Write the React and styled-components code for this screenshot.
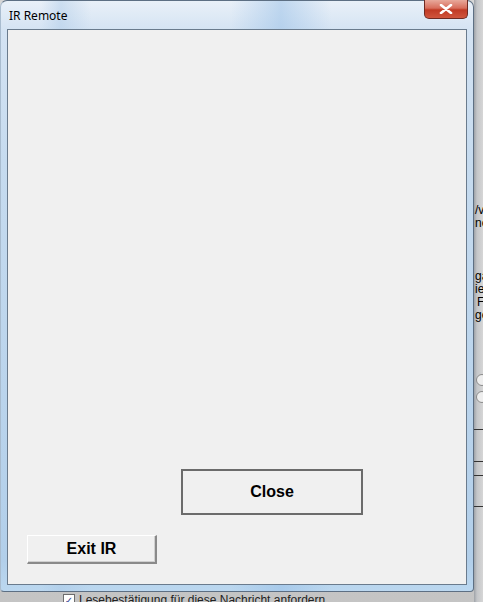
import React from 'react'
import styled, { createGlobalStyle } from 'styled-components'

const Global = createGlobalStyle`
  html, body { margin: 0; padding: 0; background: #c9c9c9; }
`;

const Desktop = styled.div`
  width: 483px;
  height: 602px;
  overflow: hidden;
  display: grid;
  grid-template-columns: 474px 9px;
  grid-template-rows: 592px 10px;
  background: linear-gradient(180deg, #d6d6d6, #c4c4c4);
  font-family: "Noto Sans", "DejaVu Sans", sans-serif;
`;

const Frame = styled.div`
  grid-column: 1;
  grid-row: 1;
  display: flex;
  flex-direction: column;
  border-radius: 7px 7px 4px 4px;
  border: 1px solid #5d6f83;
  border-left-color: #a9bccf;
  box-sizing: border-box;
  background:
    linear-gradient(90deg, rgba(255,255,255,0) 0px, rgba(255,255,255,0) 40px, rgba(170,200,230,0.45) 60px, rgba(255,255,255,0) 90px, rgba(255,255,255,0) 230px, rgba(150,190,230,0.5) 280px, rgba(255,255,255,0) 330px),
    linear-gradient(180deg, #e9f0f8 0px, #d4e3f3 30px, #c6dbef 160px, #b2cfea 560px, #bcd8f0 592px);
  padding: 0 6px 6px 6px;
`;

const TitleBar = styled.div`
  height: 28px;
  display: flex;
  align-items: flex-start;
  justify-content: space-between;
`;

const Title = styled.span`
  font-size: 12px;
  color: #000;
  padding: 7px 0 0 2px;
  line-height: 16px;
`;

const CloseX = styled.div`
  width: 42px;
  height: 18px;
  margin-top: -1px;
  margin-right: -1px;
  border: 1px solid #6e2a22;
  border-top: none;
  border-radius: 0 0 5px 5px;
  background: linear-gradient(180deg, #e8a99b 0%, #d86e5c 45%, #c03a24 55%, #d0553d 100%);
  display: flex;
  align-items: center;
  justify-content: center;
`;

const Client = styled.div`
  flex: 1;
  background: #f0f0f0;
  border: 1px solid #6a7b8d;
  display: flex;
  flex-direction: column;
  justify-content: flex-end;
  padding: 0 0 20px 0;
`;

const CloseButton = styled.div`
  width: 178px;
  height: 42px;
  margin-left: 173px;
  border: 2px solid #6b6b6b;
  display: flex;
  align-items: center;
  justify-content: center;
  font: bold 16px "Liberation Sans", Arial, sans-serif;
  color: #000;
`;

const ExitButton = styled.div`
  width: 127px;
  height: 26px;
  margin: 20px 0 0 19px;
  border-top: 1px solid #fff;
  border-left: 1px solid #fff;
  border-right: 2px solid #8a8a8a;
  border-bottom: 2px solid #8a8a8a;
  box-shadow: inset -1px -1px 0 #d0d0d0;
  display: flex;
  align-items: center;
  justify-content: center;
  font: bold 16px "Liberation Sans", Arial, sans-serif;
  color: #000;
`;

const Side = styled.div`
  grid-column: 2;
  grid-row: 1 / 3;
  background: linear-gradient(90deg, #9fa3a8 0px, #c4c6c9 3px, #d6d6d6 9px);
  display: flex;
  flex-direction: column;
  font: 12px "Liberation Sans", Arial, sans-serif;
  color: #000;
  overflow: hidden;
  white-space: nowrap;
`;

const SideText = styled.span`
  line-height: 13px;
  margin-top: ${p => p.top || 0}px;
  padding-left: ${p => p.indent || 1}px;
`;

const Radio = styled.span`
  width: 10px;
  height: 10px;
  border: 1px solid #8a8a8a;
  border-radius: 50%;
  margin-top: ${p => p.top}px;
  margin-left: 2px;
  background: #eee;
`;

const Rule = styled.span`
  height: 1px;
  background: #333;
  margin-top: ${p => p.top}px;
`;

const Bottom = styled.div`
  grid-column: 1;
  grid-row: 2;
  display: flex;
  align-items: flex-start;
  padding-left: 63px;
  gap: 4px;
  overflow: hidden;
`;

const Check = styled.span`
  width: 10px;
  height: 10px;
  margin-top: 2px;
  border: 1px solid #6d6d6d;
  background: #fff;
  font-size: 10px;
  line-height: 10px;
  color: #2a3b8f;
  text-align: center;
`;

const BottomText = styled.span`
  font: 12px "Liberation Sans", Arial, sans-serif;
  color: #222;
  margin-top: 1px;
  white-space: nowrap;
`;

const App = () => {
  return (
    <>
      <Global />
      <Desktop>
        <Frame>
          <TitleBar>
            <Title>IR Remote</Title>
            <CloseX>
              <svg width="14" height="10" viewBox="0 0 14 10">
                <path d="M2 1 L12 9 M12 1 L2 9" stroke="#fff" strokeWidth="2.6" strokeLinecap="round" />
              </svg>
            </CloseX>
          </TitleBar>
          <Client>
            <CloseButton>Close</CloseButton>
            <ExitButton>Exit IR</ExitButton>
          </Client>
        </Frame>
        <Side>
          <SideText top={204}>/v</SideText>
          <SideText>ne</SideText>
          <SideText top={40}>ga</SideText>
          <SideText>ie</SideText>
          <SideText indent={3}>F</SideText>
          <SideText>ge</SideText>
          <Radio top={52} />
          <Radio top={5} />
          <Rule top={26} />
          <Rule top={31} />
          <Rule top={13} />
          <Rule top={30} />
        </Side>
        <Bottom>
          <Check>✓</Check>
          <BottomText>Lesebestätigung für diese Nachricht anfordern</BottomText>
        </Bottom>
      </Desktop>
    </>
  )
}

export default App
